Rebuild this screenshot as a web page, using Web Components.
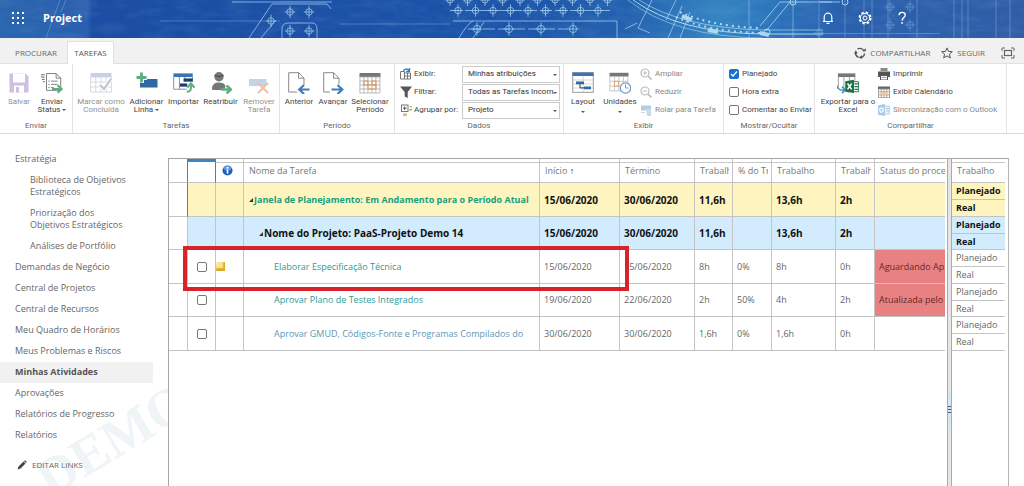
<!DOCTYPE html>
<html lang="pt-BR">
<head>
<meta charset="utf-8">
<title>Project - Minhas Atividades</title>
<style>
  body { margin: 0; background: #fff; color: #666; font: 9px/12px "Open Sans", "Noto Sans", sans-serif; }
</style>
</head>
<body>
<project-app></project-app>

<script>
const html = (s, ...v) => s.reduce((a, p, i) => a + p + (v[i] ?? ''), '');

class Base extends HTMLElement {
  connectedCallback() {
    if (this.shadowRoot) return;
    this.attachShadow({ mode: 'open' }).innerHTML =
      '<style>*{box-sizing:border-box}:host{display:block;box-sizing:border-box}' + this.css() + '</style>' + this.view();
  }
  css() { return ''; }
  view() { return '<slot></slot>'; }
}

/* ---------- icons ---------- */
const calGrid = (c, x0, y0, x1, y1, dx, dy) => {
  let d = '';
  for (let x = x0; x <= x1; x += dx) d += `M${x} ${y0}V${y1}`;
  for (let y = y0; y <= y1; y += dy) d += `M${x0} ${y}H${x1}`;
  return `<path d="${d}" fill="none" stroke="${c}" stroke-width=".8"/>`;
};
const arrowR = '<path d="M11 17.500h9M16.500 13.500l4.500 4-4.500 4" fill="none" stroke="#5fae80" stroke-width="2.400"/>';
const ICONS = {
  save: ['0 0 22 22', '<path d="M1.500 1.500h16l3 3v16h-19z" fill="#cdbfe0"/><path d="M5 1.500h12v9H5z" fill="#fff"/><path d="M6 13.500h10v7H6z" fill="#fff"/><path d="M8 15h3v5.500H8z" fill="#cdbfe0"/>'],
  send: ['0 0 24 22', '<path d="M6 .7h10.500l5 5V19H6z" fill="#fff" stroke="#777"/><path d="M16.500.7v5h5" fill="none" stroke="#777"/><path d="M0 2h4M0 4.500h4M1 7h3M2 9.500h2" stroke="#555"/><path d="M8 9h1.500M11 9h7M8 12.500h1.500M11 12.500h7M8 16h1.500M11 16h3" stroke="#777"/><path d="M12 17.500h9M18 13.500l4.500 4-4.500 4" fill="none" stroke="#5fae80" stroke-width="2.300"/>'],
  mark: ['0 0 22 22', '<rect x=".5" y="1" width="21" height="4" fill="#c4d3e4"/>' + calGrid('#ccd3da', .5, 5, 21.5, 20, 5.25, 5) + '<path d="M10 13l4 4 7-10" fill="none" stroke="#fff" stroke-width="4"/><path d="M10 13l4 4 7-10" fill="none" stroke="#b9c0c6" stroke-width="2"/>'],
  addrow: ['0 0 22 22', '<rect x="4" y="7" width="17.500" height="8.500" fill="#2f69a3"/><path d="M5.500 0v11M0 5.500h11" stroke="#fff" stroke-width="5"/><path d="M5.500.5v10M.5 5.500h10" stroke="#5fae80" stroke-width="2.800"/>'],
  import: ['0 0 24 22', '<rect x=".5" y=".5" width="21" height="4" fill="#3b74ae"/><path d="M.7 4.500v13.300H15M7 4.500v13M13 4.500v5M21.300 4.500v5" fill="none" stroke="#888"/><rect x="11.500" y="6" width="10" height="3.500" fill="#1d3e73"/><rect x="7.500" y="11.500" width="8" height="3.500" fill="#1d3e73"/><path d="M15 20.500c4 0 5-2 4.500-7M15.500 16l4-4.500 4 4.500" fill="none" stroke="#5fae80" stroke-width="2.300"/>'],
  reassign: ['0 0 22 22', '<circle cx="9" cy="4.800" r="4.700" fill="#777"/><path d="M2 17c0-5 3-6.500 7-6.500s6 1.500 6.500 4L14 18H3.500C2.500 18 2 17.800 2 17z" fill="#777"/><path d="M4.500 3.500q4 2 9 0" stroke="#444" fill="none"/>' + arrowR],
  remove: ['0 0 22 22', '<rect x="1" y="7" width="17.500" height="7" fill="#c2d4e8"/><path d="M10 11l10 10M20 11L10 21" stroke="#f1bfae" stroke-width="2.200"/>'],
  prev: ['0 0 22 22', '<path d="M9 20H.7V.7h9.800l5.500 5.500v6.500" fill="#fff" stroke="#888"/><path d="M10.500.7v5.500H16" fill="none" stroke="#888"/><path d="M21.500 17.500h-10M16 13l-4.800 4.500 4.800 4.500" fill="none" stroke="#3e7dbb" stroke-width="2.200"/>'],
  next: ['0 0 22 22', '<path d="M8 20H1.700V.7h9.800l5.500 5.500v6" fill="#fff" stroke="#888"/><path d="M11.500.7v5.500H17" fill="none" stroke="#888"/><path d="M9.500 17.500h11M15.500 13l4.800 4.500-4.800 4.500" fill="none" stroke="#3e7dbb" stroke-width="2.200"/>'],
  period: ['0 0 22 22', '<rect x=".5" y="1" width="21" height="4" fill="#777"/>' + calGrid('#aaa', .9, 5, 21, 21, 4, 4) + '<path d="M5 9h4v4H5zM9 13h8v4H9zM13 9h4v4h-4z" fill="none" stroke="#d9985c"/>'],
  layout: ['0 0 22 22', '<rect x=".7" y=".7" width="20.600" height="19.600" fill="#fff" stroke="#999"/><rect x=".5" y=".5" width="21" height="3.500" fill="#3b74ae"/><path d="M11 4v16M1 8h20M1 12h20M1 16h20" stroke="#ccc" stroke-width=".8"/><path d="M4 9.500h8v2.800H4zM12 14.500h7v2.800h-7z" fill="#2f69a3"/><path d="M8 12.300v3.600h4" fill="none" stroke="#333"/>'],
  units: ['0 0 22 22', '<rect x=".5" y=".8" width="19" height="3.700" fill="#777"/>' + calGrid('#bbb', .9, 4.5, 19, 19, 4.5, 4.8) + '<path d="M5.500 9.300h4v5h-4z" fill="none" stroke="#e0a775"/><circle cx="16.500" cy="16" r="5.200" fill="#fff" stroke="#6f9dc6" stroke-width="1.200"/><path d="M16.500 12.500V16h3" fill="none" stroke="#6f9dc6"/>'],
  excel: ['0 0 24 22', '<path d="M1 .5h19v4H1z" fill="#777"/><path d="M1.500 4.500v11M7.500 4.500v12M13.500 4.500v4M19.500 4.500v4" stroke="#999"/><path d="M0 14c1 4 3 5 8 4.500M5.500 15l3.500 3.500L5.500 22" fill="none" stroke="#4d8ecb" stroke-width="1.800"/><path d="M18 9.500h5.500v11H18z" fill="#fff" stroke="#21774a"/><path d="M19 12h4M19 15h4M19 18h4" stroke="#21774a" stroke-width="1.500"/><path d="M9 9l9.500-1.500v14.500L9 20.500z" fill="#1d7044"/><path d="M11.500 11.500l4.500 6.500M16 11.500l-4.500 6.500" stroke="#fff" stroke-width="1.600"/>'],
  view: ['0 0 12 12', '<path d="M.5 3.500h4V11h-4zM4.500 5h6v6h-6M4.500 8H11M7.500 5v6" fill="#fff" stroke="#777"/><path d="M3.500 3c.5-2 3.500-3 5.500-.5M9.500 0v3.500H6" fill="none" stroke="#3e7dbb" stroke-width="1.300"/>'],
  filter: ['0 0 12 12', '<path d="M0 .5h12L7.700 6v6l-3-1.500V6z" fill="#555"/>'],
  group: ['0 0 12 12', '<rect x="1.500" y="1" width="6.500" height="6.500" fill="#fff" stroke="#777"/><path d="M3 4.200h3.500M4.700 2.500V6" stroke="#555"/><path d="M9.500 2h2.500v1.500H9.500zM3 9.500h4V12H3z" fill="#e3b871"/><path d="M9.500 5h2.500v1.500H9.500z" fill="#7b9cc0"/>'],
  zoomin: ['0 0 12 12', '<circle cx="5" cy="5" r="4" fill="#fff" stroke="#bbb" stroke-width="1.200"/><path d="M8 8l3.500 3.500" stroke="#bbb" stroke-width="1.600"/><path d="M3 5h4M5 3v4" stroke="#bbb"/>'],
  zoomout: ['0 0 12 12', '<circle cx="5" cy="5" r="4" fill="#fff" stroke="#bbb" stroke-width="1.200"/><path d="M8 8l3.500 3.500" stroke="#bbb" stroke-width="1.600"/><path d="M3 5h4" stroke="#bbb"/>'],
  scroll: ['0 0 12 12', '<path d="M1 1.500h10v5H1z" fill="#b5cbe3"/><path d="M1 8.500h4" stroke="#ccd8e4"/><path d="M6 5h5v7H7z" fill="#c8d9ea"/>'],
  print: ['0 0 12 12', '<path d="M2.500 0h7v3h-7z" fill="#888"/><path d="M0 3.500h12V9H0z" fill="#555"/><path d="M2.500 7.500h7V12h-7z" fill="#fff" stroke="#555"/><path d="M3.500 9.500h5" stroke="#999"/>'],
  calendar: ['0 0 12 12', '<rect y=".5" width="12" height="2.500" fill="#666"/>' + calGrid('#9b8b80', .5, 3, 11.5, 12, 2.75, 2.9) + '<path d="M3 6h6v3H3z" fill="#ecc7a3"/>'],
  outlook: ['0 0 12 12', '<path d="M6 2h5.500v8H6z" fill="#eaf2fa" stroke="#b9d3ec"/><path d="M8 4.500h3M8 7h3" stroke="#a9c8e6"/><path d="M0 1.200L7 0v12L0 10.800z" fill="#a9cbeb"/><ellipse cx="3.500" cy="6" rx="1.700" ry="2.200" fill="none" stroke="#fff" stroke-width="1.200"/>'],
  share: ['0 0 12 12', '<g fill="none" stroke="#555" stroke-width="1.400"><path d="M3.500 2a4.600 4.600 0 0 1 6.600 2.200"/><path d="M10.600 6.500a4.600 4.600 0 0 1-3.500 4"/><path d="M4.500 10.300A4.600 4.600 0 0 1 1.500 6"/></g><path d="M8.300 4.300h3.500V1.200zM7.800 8v4l-3-1.500zM0 6.500l1.800-3.300 2 3.300z" fill="#555"/>'],
  star: ['0 0 12 12', '<path d="M6 .9l1.500 3.500 3.800.3-2.900 2.500.9 3.700L6 8.900l-3.300 2 .9-3.700L.7 4.700l3.800-.3z" fill="none" stroke="#555"/>'],
  focus: ['0 0 14 12', '<path d="M1 4V1h3M10 1h3v3M13 8v3h-3M4 11H1V8" fill="none" stroke="#666"/><rect x="3.500" y="3.500" width="7" height="5" fill="none" stroke="#666" stroke-width="1.200"/>'],
  pencil: ['0 0 10 10', '<path d="M.5 9.500l1-3 5-5 2 2-5 5zM7 1l1-.8 1.800 1.800-.8 1z" fill="#444"/>'],
  bell: ['0 0 12 14', '<path d="M1 10.500h10M2.200 10.500V6a3.800 3.800 0 0 1 7.600 0v4.500M4.500 12.300h3" fill="none" stroke="#fff" stroke-width="1.200"/>'],
  gear: ['0 0 14 14', '<circle cx="7" cy="7" r="5.600" fill="none" stroke="#fff" stroke-width="1.800" stroke-dasharray="2.400 2"/><circle cx="7" cy="7" r="4.600" fill="none" stroke="#fff"/><circle cx="7" cy="7" r="2" fill="none" stroke="#fff"/>'],
  help: ['0 0 10 14', '<path d="M2 4.200C2 .5 8.200.6 8.200 4.100 8.200 6.500 5.100 6.700 5.100 9.800" fill="none" stroke="#fff" stroke-width="1.300"/><circle cx="5.100" cy="12" r=".9" fill="#fff"/>'],
  info: ['0 0 12 12', '<circle cx="6" cy="6" r="5.500" fill="#1f5fb5"/><ellipse cx="6" cy="3.500" rx="4" ry="2.500" fill="#5e9be0"/><path d="M6 5v4.500" stroke="#fff" stroke-width="1.800"/><circle cx="6" cy="3" r="1.100" fill="#fff"/>'],
  note: ['0 0 9 9', '<path d="M1 0h8v9H0z" fill="#d9a92c"/><path d="M1 0h6v6H0z" fill="#fbe58c"/><path d="M0 6h7V0" fill="none" stroke="#f3cf52"/>'],
};
class AppIcon extends Base {
  css() { return ':host{width:var(--icon-w,12px);height:var(--icon-h,12px);flex:none}svg{display:block;width:100%;height:100%}'; }
  view() {
    const [box, body] = ICONS[this.getAttribute('name')];
    return `<svg viewBox="${box}" aria-hidden="true">${body}</svg>`;
  }
}

/* ---------- blue suite bar with blueprint artwork ---------- */
class SuiteBar extends Base {
  css() { return `
    :host{position:relative;height:38px;background:#1d52a6;overflow:hidden;color:#fff}
    .art{position:absolute;inset:0;width:100%;height:100%}
    header{position:relative;height:36px;display:flex;align-items:center;padding:0 115px 0 12px}
    button{all:unset;display:grid;place-items:center}
    .dots{width:12px;height:12px}
    h1{margin:0 auto 0 19px;font-size:11px;font-weight:700}
    .tools{display:flex;gap:23px;--icon-w:14px;--icon-h:14px}`; }
  view() {
    const ring = (x, y, r = 3.2) => `<circle cx="${x}" cy="${y}" r="${r}"/><path d="M${x} ${y - r - 3}v${2 * r + 6}M${x - r - 2} ${y}h${2 * r + 4}"/>`;
    let rings = '';
    for (let i = 0; i < 9; i++) rings += ring(458 + i * 17.5, 10.5);
    for (let i = 0; i < 10; i++) rings += ring(450 + i * 17.5, 0, 3);
    for (const x of [477, 509, 541, 573]) rings += ring(x, 29, 3.6);
    rings += ring(290, 12) + ring(309, 12) + ring(290, 31) + ring(309, 31) + ring(271, 21);
    let dots = '';
    for (const y of [1, 6, 11]) for (const x of [1, 6, 11]) dots += `<rect x="${x - 1}" y="${y - 1}" width="2" height="2" fill="#fff"/>`;
    return html`
    <svg class="art" viewBox="0 0 1024 38" preserveAspectRatio="none" aria-hidden="true">
      <defs><linearGradient id="g"><stop offset="0" stop-color="#2b66ae"/><stop offset=".085" stop-color="#2a5fae"/><stop offset=".09" stop-color="#1a4da3"/><stop offset=".5" stop-color="#1c54aa"/><stop offset=".62" stop-color="#2463b0"/><stop offset=".7" stop-color="#3584c2"/><stop offset=".76" stop-color="#2b72ba"/><stop offset=".82" stop-color="#2a60ad"/><stop offset="1" stop-color="#2f5da6"/></linearGradient>
      <filter id="n"><feTurbulence type="fractalNoise" baseFrequency=".04 .12" numOctaves="4" seed="4"/><feColorMatrix values="0 0 0 0 .5  0 0 0 0 .75  0 0 0 0 .95  .9 0 0 0 -.35"/></filter></defs>
      <rect width="1024" height="38" fill="url(#g)"/>
      <rect width="1024" height="38" filter="url(#n)" opacity=".2"/>
      <g fill="none" stroke="#b4dcf2" stroke-width=".8" opacity=".85">
        ${rings}
        <path d="M232 2h100M272 4l-23 34M272 4h55l4 5M276 20l-15 18M282 38v-9q0-6 6-6h24q5 0 5 6v9"/>
        <path d="M453 21h164v17M473 21q-6 3-14 17M484 22l-11 16" />
        <path d="M450 10.500h160M468 29h100" stroke-dasharray="12 3"/>
        <path d="M625 29l12-6M652 0l-14 28 12 5M668 38l14-32M676 0l-10 20M690 12l-10 26"/>
        <path d="M749 0v38M793 0v38" opacity=".7"/>
      </g>
      <g fill="none" stroke="#b9e3f6" opacity=".9">
        <path d="M633 0q46 33 130 34h60" /><path d="M639 0q44 28 124 30h60" stroke-width=".7"/><path d="M628 0q46 37 135 38" stroke-width=".6"/>
        <path d="M680 12q30 14 80 16M676 17q30 14 84 16" stroke-width="2" stroke-dasharray="2 4"/>
        <path d="M682 16l10 4M708 30l10 2M760 33l9 2" stroke-width="4"/>
        <path d="M760 26l20-24h52M766 31l24-29M820 2h20" stroke-width=".8"/><circle cx="793" cy="2" r="3"/><circle cx="845" cy="2" r="3"/><circle cx="767" cy="32" r="3"/>
      </g>
      <g fill="none" stroke="#8fb9e2" stroke-width=".7" opacity=".6">
        <path d="M820 33.500h120M819 0v38M845 0v38M864 0v38M872 0v38M888 0v38M917 0v38M954 0v38M962 0v38M968 0v38M996 0v38M1010 0v38M160 21h120M340 24h110M60 0l-14 38M66 0l-5 12"/>
        ${ring(890, 7)}${ring(910, 7)}${ring(890, 25)}${ring(910, 25)}${ring(819, 33)}
      </g>
    </svg>
    <header>
      <button aria-label="Iniciador de aplicativos"><svg class="dots" viewBox="0 0 12 12">${dots}</svg></button>
      <h1>Project</h1>
      <div class="tools">
        <button aria-label="Notificações"><app-icon name="bell"></app-icon></button>
        <button aria-label="Configurações"><app-icon name="gear"></app-icon></button>
        <button aria-label="Ajuda"><app-icon name="help"></app-icon></button>
      </div>
    </header>`;
  }
}

/* ---------- ribbon tabs ---------- */
class RibbonTabs extends Base {
  css() { return `
    :host{background:#f1f1f1;border-bottom:1px solid #e1e1e1;font-size:8px}
    div{height:25px;display:flex;align-items:flex-end;padding:0 9px 0 5px}
    button{all:unset;box-sizing:border-box;display:flex;align-items:center;height:20px;color:#666}
    .tab{width:62px;justify-content:center}
    .on{width:47px;background:#fff;border:1px solid #e1e1e1;border-bottom:0;margin-bottom:-1px;height:23px;color:#555}
    .push{margin-left:auto}
    .act{gap:4px}
    .act+.act{margin-left:11px}
    .last{--icon-w:14px}
    .act.last{margin-left:16px}`; }
  view() { return html`<div>
    <button class="tab">PROCURAR</button><button class="tab on">TAREFAS</button>
    <button class="act push"><app-icon name="share"></app-icon>COMPARTILHAR</button>
    <button class="act"><app-icon name="star"></app-icon>SEGUIR</button>
    <button class="act last" aria-label="Foco no conteúdo"><app-icon name="focus"></app-icon></button></div>`; }
}

/* ---------- ribbon ---------- */
class RibbonGroup extends Base {
  css() { return `
    :host{display:flex;flex-direction:column;border-right:1px solid #e4e4e4;height:69px;padding:1px 0 0 var(--pad,2px)}
    .body{display:flex;flex:1}
    .label{text-align:center;font:8px/14px Roboto,sans-serif;color:#666;margin-left:calc(var(--pad,2px) * -1)}`; }
  view() { return `<div class="body"><slot></slot></div><div class="label">${this.getAttribute('label')}</div>`; }
}
class RibbonButton extends Base {
  css() { return `
    :host{flex:none;padding-top:7px}
    button{all:unset;display:flex;flex-direction:column;align-items:center;width:100%;text-align:center;font:8px/8px Roboto,sans-serif;color:#444;--icon-w:22px;--icon-h:22px;white-space:nowrap}
    span{margin-top:4px}
    :host([disabled]) button{color:#909090}
    i{display:inline-block;border:2px solid transparent;border-top:2px solid #555;border-bottom:0;vertical-align:middle;margin-left:2px}
    :host([drop="below"]) i{display:block;width:4px;margin:5px auto 0}`; }
  view() {
    const drop = this.hasAttribute('drop') ? '<i></i>' : '';
    return `<button ${this.hasAttribute('disabled') ? 'disabled' : ''}><app-icon name="${this.getAttribute('icon')}"></app-icon><span>${this.getAttribute('label').replace('|', '<br>')}${drop}</span></button>`;
  }
}
class RibbonCommand extends Base {
  css() { return `
    :host{height:18px}
    button{all:unset;display:flex;align-items:center;gap:3px;height:18px;font:8px/12px Roboto,sans-serif;color:#444;white-space:nowrap}
    :host([disabled]) button{color:#888}`; }
  view() { return `<button ${this.hasAttribute('disabled') ? 'disabled' : ''}><app-icon name="${this.getAttribute('icon')}"></app-icon><slot></slot></button>`; }
}
class RibbonSelect extends Base {
  css() { return `
    :host{height:18px;display:flex;align-items:center;color:#444;font:8px/12px Roboto,sans-serif}
    label{flex:1;margin-left:2px;white-space:nowrap}
    .box{position:relative;width:98px}
    select{appearance:none;display:block;width:100%;height:17px;border:1px solid #ccc;border-radius:0;background:#fff;padding:0 4px 0 5px;font:inherit;color:#333;text-overflow:clip}
    .box::after{content:"";position:absolute;right:3px;top:8px;border:2px solid transparent;border-top:2px solid #555;border-bottom:0}`; }
  view() { return `<app-icon name="${this.getAttribute('icon')}"></app-icon><label for="s">${this.getAttribute('label')}</label><span class="box"><select id="s"><option>${this.getAttribute('value')}</option></select></span>`; }
}
const CHECK_CSS = `
    input{appearance:none;flex:none;margin:0;width:10px;height:10px;border:1px solid #777;border-radius:2px;background:#fff}
    input:checked{border-color:#1a6fd0;background:#1a6fd0 url("data:image/svg+xml,%3Csvg xmlns='http://www.w3.org/2000/svg' viewBox='0 0 8 8'%3E%3Cpath d='M1 4l2 2 4-4.500' fill='none' stroke='%23fff' stroke-width='1.400'/%3E%3C/svg%3E") center/8px 8px no-repeat}`;
class RibbonCheck extends Base {
  css() { return `:host{height:18px}label{display:flex;align-items:center;gap:3px;height:18px;font:8px/12px Roboto,sans-serif;color:#444;white-space:nowrap}${CHECK_CSS}`; }
  view() { return `<label><input type="checkbox" ${this.hasAttribute('checked') ? 'checked' : ''}><slot></slot></label>`; }
}
class RibbonBar extends Base {
  css() { return `
    :host{display:grid;grid-template-columns:73px 207px 115px 169px 160px 91px 192px 1fr;border-bottom:1px solid #d8d8d8}
    .col{display:flex;flex-direction:column;flex:1}`; }
  view() { return html`
    <ribbon-group label="Enviar">
      <ribbon-button style="width:34px" icon="save" label="Salvar" disabled></ribbon-button>
      <ribbon-button style="width:32px" icon="send" label="Enviar|Status" drop></ribbon-button>
    </ribbon-group>
    <ribbon-group label="Tarefas" style="--pad:3px">
      <ribbon-button style="width:50px" icon="mark" label="Marcar como|Concluída" disabled></ribbon-button>
      <ribbon-button style="width:41px" icon="addrow" label="Adicionar|Linha" drop></ribbon-button>
      <ribbon-button style="width:33px" icon="import" label="Importar"></ribbon-button>
      <ribbon-button style="width:41px" icon="reassign" label="Reatribuir"></ribbon-button>
      <ribbon-button style="width:36px" icon="remove" label="Remover|Tarefa" disabled></ribbon-button>
    </ribbon-group>
    <ribbon-group label="Período">
      <ribbon-button style="width:34px" icon="prev" label="Anterior"></ribbon-button>
      <ribbon-button style="width:34px" icon="next" label="Avançar"></ribbon-button>
      <ribbon-button style="width:40px" icon="period" label="Selecionar|Período"></ribbon-button>
    </ribbon-group>
    <ribbon-group label="Dados" style="--pad:5px">
      <div class="col" style="padding-right:3px">
        <ribbon-select icon="view" label="Exibir:" value="Minhas atribuições"></ribbon-select>
        <ribbon-select icon="filter" label="Filtrar:" value="Todas as Tarefas Incom"></ribbon-select>
        <ribbon-select icon="group" label="Agrupar por:" value="Projeto"></ribbon-select>
      </div>
    </ribbon-group>
    <ribbon-group label="Exibir">
      <ribbon-button style="width:34px" icon="layout" label="Layout" drop="below"></ribbon-button>
      <ribbon-button style="width:40px" icon="units" label="Unidades" drop="below"></ribbon-button>
      <div class="col">
        <ribbon-command icon="zoomin" disabled>Ampliar</ribbon-command>
        <ribbon-command icon="zoomout" disabled>Reduzir</ribbon-command>
        <ribbon-command icon="scroll" disabled>Rolar para Tarefa</ribbon-command>
      </div>
    </ribbon-group>
    <ribbon-group label="Mostrar/Ocultar" style="--pad:5px">
      <div class="col">
        <ribbon-check checked>Planejado</ribbon-check>
        <ribbon-check>Hora extra</ribbon-check>
        <ribbon-check>Comentar ao Enviar</ribbon-check>
      </div>
    </ribbon-group>
    <ribbon-group label="Compartilhar" style="--pad:3px">
      <ribbon-button style="width:60px" icon="excel" label="Exportar para o|Excel"></ribbon-button>
      <div class="col">
        <ribbon-command icon="print">Imprimir</ribbon-command>
        <ribbon-command icon="calendar">Exibir Calendário</ribbon-command>
        <ribbon-command icon="outlook" disabled>Sincronização com o Outlook</ribbon-command>
      </div>
    </ribbon-group>`; }
}

/* ---------- side navigation ---------- */
class QuickNav extends Base {
  css() { return `
    :host{position:relative;overflow:hidden;padding-top:15px}
    .mark{position:absolute;left:55px;bottom:-20px;font:700 54px/54px "Liberation Serif",serif;color:#eff4f6;transform:rotate(-31deg);transform-origin:0 100%;white-space:nowrap}
    nav{position:relative;width:153px}
    ul{list-style:none;margin:0;padding:0}
    a{display:block;padding:4px 0 5px 15px;color:#666;text-decoration:none}
    ul ul a{padding-left:30px;width:136px}
    .on{background:#f1f1f1;font-weight:700;color:#555}
    .edit{display:flex;align-items:center;gap:5px;margin-top:9px;padding-left:17px;font-size:8px;--icon-w:10px;--icon-h:10px}`; }
  view() {
    const li = t => `<li><a href="#">${t}</a></li>`;
    return html`<div class="mark" aria-hidden="true">DEMO</div><nav><ul>
      <li><a href="#">Estratégia</a><ul>${['Biblioteca de Objetivos Estratégicos', 'Priorização dos<br>Objetivos Estratégicos', 'Análises de Portfólio'].map(li).join('')}</ul></li>
      ${['Demandas de Negócio', 'Central de Projetos', 'Central de Recursos', 'Meu Quadro de Horários', 'Meus Problemas e Riscos'].map(li).join('')}
      <li><a href="#" class="on" aria-current="page">Minhas Atividades</a></li>
      ${['Aprovações', 'Relatórios de Progresso', 'Relatórios'].map(li).join('')}
    </ul><a class="edit" href="#"><app-icon name="pencil"></app-icon>EDITAR LINKS</a></nav>`;
  }
}

/* ---------- task grid ---------- */
const ROWS = [
  { kind: 'window', name: 'Janela de Planejamento: Em Andamento para o Período Atual', c: ['15/06/2020', '30/06/2020', '11,6h', '', '13,6h', '2h', ''] },
  { kind: 'project', name: 'Nome do Projeto: PaaS-Projeto Demo 14', c: ['15/06/2020', '30/06/2020', '11,6h', '', '13,6h', '2h', ''] },
  { kind: 'task', note: true, name: 'Elaborar Especificação Técnica', c: ['15/06/2020', '15/06/2020', '8h', '0%', '8h', '0h', 'Aguardando Ap'] },
  { kind: 'task', name: 'Aprovar Plano de Testes Integrados', c: ['19/06/2020', '22/06/2020', '2h', '50%', '4h', '2h', 'Atualizada pelo'] },
  { kind: 'task plain', name: 'Aprovar GMUD, Códigos-Fonte e Programas Compilados do', c: ['30/06/2020', '30/06/2020', '1,6h', '0%', '1,6h', '0h', ''] },
];
class TaskGrid extends Base {
  css() { return `
    :host{position:relative;display:flex;border:1px solid #a6a6a6;border-bottom:0;border-right-color:#b4b4b4}
    table{border-collapse:separate;border-spacing:0;table-layout:fixed;width:100%}
    th,td{padding:0 0 0 4px;border-right:1px solid #c4c4c4;border-bottom:1px solid #c4c4c4;text-align:left;white-space:nowrap;overflow:hidden;font-weight:inherit}
    th{height:24px;padding-left:5px;padding-right:3px;color:#777;background:linear-gradient(#c8c8c8,#c8c8c8) 0 3px/100% 1px no-repeat}
    th span{display:block;overflow:hidden}
    td{height:34px}
    tr:nth-child(even) td{height:33px}
    .left{flex:1;min-width:0;overflow:hidden;margin-right:2px}
    .left th:last-child,.left td:last-child,.right th,.right td{border-right:0}
    th:last-child{padding-right:0}
    th:first-child{background:none}
    .right th:first-child{background:linear-gradient(#c8c8c8,#c8c8c8) 0 3px/100% 1px no-repeat}
    th.sel{background:none;border-top:3px solid #3c86c4;border-right-color:#3c86c4}
    .edge{border-right-color:#3c86c4}
    .num,.sel,.ind{padding:0}
    .sel input{display:block;margin:0 auto}
    th.ind{--icon-w:11px;--icon-h:11px;padding:0 6px}
    td.ind{--icon-w:9px;--icon-h:9px}
    .window td:not(.num),.right .window td{background:#fdf4bf}
    .project td:not(.num),.right .project td{background:#d2ecfd}
    .window,.project{font-size:10px;font-weight:700;color:#111}
    .window .name,.right .window,.right .project{font-size:9px}
    .name a{text-decoration:none;color:#2d9a9a}
    .plain a{color:#5c97b4}
    .window .name a{color:#17a07c}
    .project .name a{color:#111}
    .window .name{padding-left:5px}
    .project .name{padding-left:15px}
    .task .name{padding-left:30px}
    .name i{display:inline-block;border:2px solid transparent;border-right-color:#333;border-bottom-color:#333;margin-right:1px;vertical-align:1px}
    td.alert{background:#e88282;color:#6b2525}
    .split{flex:none;width:5px;border:1px solid #aaa;border-top:0;border-bottom:0;background:#e6e6e6}
    .grip{margin-top:233px;height:36px;background:linear-gradient(#557,#557) 0 14px/3px 1px no-repeat,linear-gradient(#557,#557) 0 17px/3px 1px no-repeat,linear-gradient(#557,#557) 0 20px/3px 1px no-repeat,#d5e8f2}
    .right{flex:none;width:53px;margin-right:3px}
    .right td,.right tr:nth-child(even) td{height:17px}
    .right tr:nth-child(4n) td{height:16px}
    .callout{position:absolute;left:14px;top:87px;width:446px;height:45px;border:4px solid #d8232a;pointer-events:none}
    ${CHECK_CSS}`; }
  view() {
    const cols = [19, 28, 28, 296, 80, 75, 38, 39, 64, 39];
    const left = ROWS.map(r => {
      const task = r.kind.startsWith('task');
      return `<tr class="${r.kind}"><td class="num${r.kind === 'window' ? ' edge' : ''}"></td>
        <td class="sel">${task ? `<input type="checkbox" aria-label="${r.name}">` : ''}</td>
        <td class="ind">${r.note ? '<app-icon name="note"></app-icon>' : ''}</td>
        <td class="name">${task ? '' : '<i></i>'}<a href="#">${r.name}</a></td>
        ${r.c.map((v, i) => `<td${i === 6 && v ? ' class="alert"' : ''}>${v}</td>`).join('')}</tr>`;
    }).join('');
    const right = ROWS.map(r => `<tr class="${r.kind}"><td>Planejado</td></tr><tr class="${r.kind}"><td>Real</td></tr>`).join('');
    return html`
      <div class="left"><table>
        <colgroup>${cols.map(w => `<col style="width:${w}px">`).join('')}<col></colgroup>
        <thead><tr><th class="edge"></th><th class="sel"></th><th class="ind"><app-icon name="info"></app-icon></th>
        ${['Nome da Tarefa', 'Início <b style="color:#222">↑</b>', 'Término', 'Trabalho', '% do Trabalho', 'Trabalho', 'Trabalho', 'Status do processo'].map(t => `<th><span>${t}</span></th>`).join('')}</tr></thead>
        <tbody>${left}</tbody></table></div>
      <div class="split"><div class="grip"></div></div>
      <div class="right"><table><thead><tr><th>Trabalho</th></tr></thead><tbody>${right}</tbody></table></div>
      <div class="callout"></div>`;
  }
}

/* ---------- page ---------- */
class ProjectApp extends Base {
  css() { return `
    :host{display:flex;flex-direction:column;min-height:100vh}
    main{flex:1;display:grid;grid-template-columns:168px 1fr}
    task-grid{margin:24px 15px 0 0}`; }
  view() { return '<suite-bar></suite-bar><ribbon-tabs></ribbon-tabs><ribbon-bar></ribbon-bar><main><quick-nav></quick-nav><task-grid></task-grid></main>'; }
}

for (const [n, c] of Object.entries({
  'app-icon': AppIcon, 'suite-bar': SuiteBar, 'ribbon-tabs': RibbonTabs, 'ribbon-group': RibbonGroup,
  'ribbon-button': RibbonButton, 'ribbon-command': RibbonCommand, 'ribbon-select': RibbonSelect, 'ribbon-check': RibbonCheck,
  'ribbon-bar': RibbonBar, 'quick-nav': QuickNav, 'task-grid': TaskGrid, 'project-app': ProjectApp,
})) customElements.define(n, c);
</script>
</body>
</html>
